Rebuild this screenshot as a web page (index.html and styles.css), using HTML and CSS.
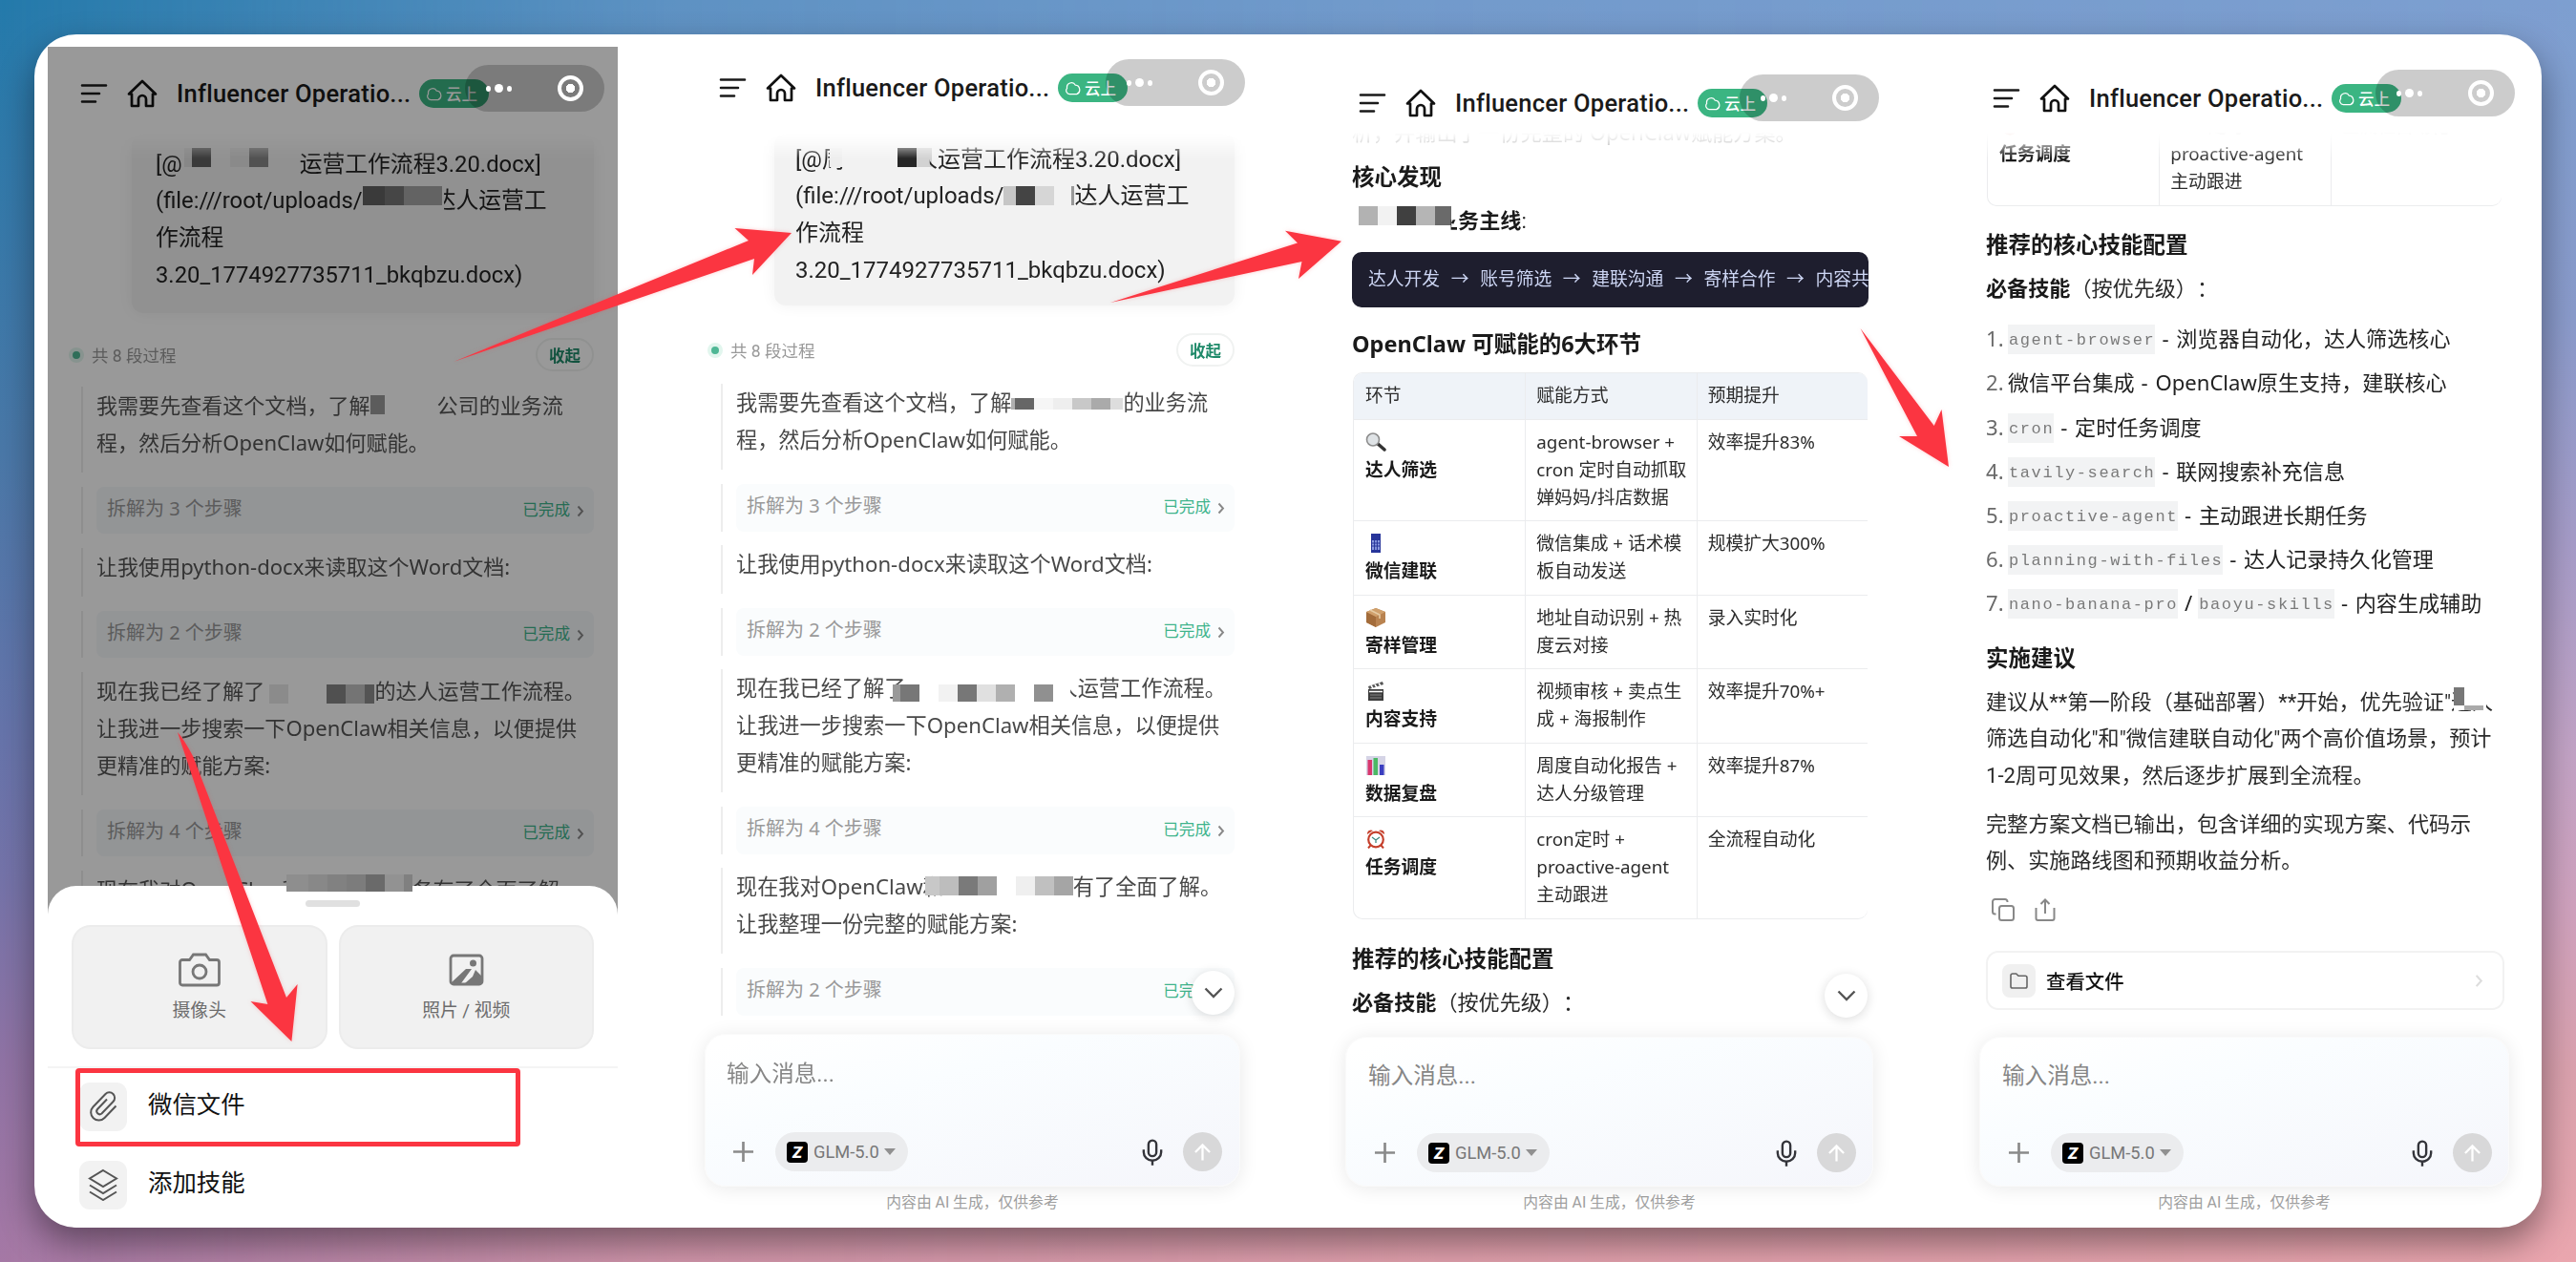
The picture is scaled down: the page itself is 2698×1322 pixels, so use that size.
FILE: index.html
```html
<!DOCTYPE html>
<html lang="zh-CN">
<head>
    <meta charset="UTF-8">
    <meta name="viewport" content="width=device-width, initial-scale=1.0">
    <title>Influencer Operation</title>
    <link rel="stylesheet" href="styles.css">
</head>
<body>
    <!-- shared icons -->
    <svg class="sprite" aria-hidden="true">
        <symbol id="i-menu" viewBox="0 0 28 20"><path d="M1.5 1.5h25M1.5 10h18M1.5 18.5h14" fill="none" stroke="currentColor" stroke-width="2.6" stroke-linecap="round"/></symbol>
        <symbol id="i-home" viewBox="0 0 32 30"><path d="M5 15.5H2L16 2l14 13.5h-3V28h-7v-7a4 4 0 0 0-8 0v7H5z" fill="none" stroke="currentColor" stroke-width="2.7" stroke-linejoin="round"/></symbol>
        <symbol id="i-cloud" viewBox="0 0 18 16"><path d="M5 14.5a4 4 0 0 1-2.8-6.600A5 5 0 0 1 11.500 4.500 5.200 5.200 0 0 1 13 14.500z" fill="none" stroke="currentColor" stroke-width="1.300"/></symbol>
        <symbol id="i-plus" viewBox="0 0 24 24"><path d="M12 1v22M1 12h22" stroke="currentColor" stroke-width="2.800"/></symbol>
        <symbol id="i-mic" viewBox="0 0 24 30"><rect x="7.500" y="1.500" width="9" height="18" rx="4.500" fill="none" stroke="currentColor" stroke-width="2.600"/><path d="M2 12v3a10 9.500 0 0 0 20 0v-3M12 24.500V30" fill="none" stroke="currentColor" stroke-width="2.600"/></symbol>
        <symbol id="i-up" viewBox="0 0 20 20"><path d="M10 19V2M2 10l8-8 8 8" fill="none" stroke="currentColor" stroke-width="2.400"/></symbol>
        <symbol id="i-right" viewBox="0 0 8 12"><path d="M1.500 1l4.500 5-4.500 5" fill="none" stroke="currentColor" stroke-width="1.900"/></symbol>
        <symbol id="i-down" viewBox="0 0 20 12"><path d="M1.500 1.500l8.500 8.500 8.500-8.500" fill="none" stroke="currentColor" stroke-width="2.400"/></symbol>
    </svg>

    <div class="frame">
        <!-- 1: picking the file -->
        <section class="phone phone-pick">
            <header class="bar">
                <svg class="menu"><use href="#i-menu"/></svg>
                <svg class="home"><use href="#i-home"/></svg>
                <h1>Influencer Operatio...</h1>
                <span class="cloud"><svg><use href="#i-cloud"/></svg>云上</span>
            </header>
            <div class="chat">
                <div class="bubble">[@<span class="mosaic m-a1"></span>运营工作流程3.20.docx]<br>(file:///root/uploads/<span class="mosaic m-a2"></span><span class="cut cut-left">达</span>人运营工<br>作流程<br>3.20_1774927735711_bkqbzu.docx)</div>
                <div class="status"><i class="dot"></i>共 8 段过程<button>收起</button></div>
                <div class="process">
                    <p>我需要先查看这个文档，了解<span class="mosaic m-a3"></span>公司的业务流<br>程，然后分析OpenClaw如何赋能。</p>
                    <div class="step">拆解为 3 个步骤<span class="done">已完成<svg><use href="#i-right"/></svg></span></div>
                    <p>让我使用python-docx来读取这个Word文档:</p>
                    <div class="step">拆解为 2 个步骤<span class="done">已完成<svg><use href="#i-right"/></svg></span></div>
                    <p>现在我已经了解了<span class="mosaic m-a4"></span>的达人运营工作流程。<br>让我进一步搜索一下OpenClaw相关信息，以便提供<br>更精准的赋能方案:</p>
                    <div class="step">拆解为 4 个步骤<span class="done">已完成<svg><use href="#i-right"/></svg></span></div>
                    <p>现在我对OpenClaw和<span class="mosaic m-a5"></span>务有了全面了解</p>
                </div>
            </div>
            <div class="dim"></div>
            <div class="capsule"><i></i><i class="mid"></i><i></i><b></b></div>
            <div class="sheet">
                <div class="handle"></div>
                <div class="cards">
                    <div class="card">
                        <svg viewBox="0 0 44 36"><path d="M4 7.500h7.500L15.500 2h13l4 5.500H40a2.500 2.500 0 0 1 2.500 2.500v21.500A2.500 2.500 0 0 1 40 34H4a2.500 2.500 0 0 1-2.500-2.500V10A2.500 2.500 0 0 1 4 7.500z"/><circle cx="22" cy="20" r="7"/></svg>
                        摄像头
                    </div>
                    <div class="card">
                        <svg viewBox="0 0 44 36"><rect x="6" y="3" width="33" height="30" rx="3"/><circle cx="29.500" cy="11" r="3.500" class="solid"/><path class="solid" d="M7 31l15-14h6l-11 15H7zM21 32l8-7 3-7 7 7v7z"/></svg>
                        照片 / 视频
                    </div>
                </div>
                <div class="option">
                    <span class="tile"><svg viewBox="0 0 32 34"><path d="M29.500 16.500L17.500 29a8 8 0 0 1-12-11.500L18.500 4a5.600 5.600 0 0 1 8 8L14.500 24.500a3.200 3.200 0 0 1-4.500-4.500L20 9.500"/></svg></span>
                    <span>微信文件</span>
                </div>
                <div class="option">
                    <span class="tile"><svg viewBox="0 0 32 34"><path d="M16 2l14 8.500L16 19 2 10.500zM2 17.500L16 26l14-8.500M2 24.500L16 33l14-8.500"/></svg></span>
                    <span>添加技能</span>
                </div>
            </div>
            <div class="mosaic m-edge"></div>
            <div class="highlight"></div>
        </section>

        <!-- 2: analysis running -->
        <section class="phone phone-run">
            <header class="bar">
                <svg class="menu"><use href="#i-menu"/></svg>
                <svg class="home"><use href="#i-home"/></svg>
                <h1>Influencer Operatio...</h1>
                <span class="cloud"><svg><use href="#i-cloud"/></svg>云上</span>
            </header>
            <div class="capsule"><i></i><i class="mid"></i><i></i><b></b></div>
            <div class="chat">
                <div class="bubble">[@周<span class="mosaic m-b1"></span><span class="cut cut-corner">人</span>运营工作流程3.20.docx]<br>(file:///root/uploads/<span class="mosaic m-b2"></span>达人运营工<br>作流程<br>3.20_1774927735711_bkqbzu.docx)</div>
                <div class="status"><i class="dot"></i>共 8 段过程<button>收起</button></div>
                <div class="process">
                    <p>我需要先查看这个文档，了解<span class="mosaic m-b3"></span>的业务流<br>程，然后分析OpenClaw如何赋能。</p>
                    <div class="step">拆解为 3 个步骤<span class="done">已完成<svg><use href="#i-right"/></svg></span></div>
                    <p>让我使用python-docx来读取这个Word文档:</p>
                    <div class="step">拆解为 2 个步骤<span class="done">已完成<svg><use href="#i-right"/></svg></span></div>
                    <p>现在我已经了解了<span class="mosaic m-b4"></span><span class="cut cut-corner">人</span>运营工作流程。<br>让我进一步搜索一下OpenClaw相关信息，以便提供<br>更精准的赋能方案:</p>
                    <div class="step">拆解为 4 个步骤<span class="done">已完成<svg><use href="#i-right"/></svg></span></div>
                    <p>现在我对OpenClaw和<span class="mosaic m-b5"></span>有了全面了解。<br>让我整理一份完整的赋能方案:</p>
                    <div class="step">拆解为 2 个步骤<span class="done">已完成<svg><use href="#i-right"/></svg></span></div>
                </div>
            </div>
            <div class="composer">
                <button class="to-bottom"><svg><use href="#i-down"/></svg></button>
                <div class="placeholder">输入消息...</div>
                <div class="tools">
                    <svg class="plus"><use href="#i-plus"/></svg>
                    <span class="model"><b>Z</b>GLM-5.0<i></i></span>
                    <svg class="mic"><use href="#i-mic"/></svg>
                    <span class="send"><svg><use href="#i-up"/></svg></span>
                </div>
            </div>
            <footer>内容由 AI 生成，仅供参考</footer>
        </section>

        <!-- 3: findings -->
        <section class="phone phone-find">
            <header class="bar">
                <svg class="menu"><use href="#i-menu"/></svg>
                <svg class="home"><use href="#i-home"/></svg>
                <h1>Influencer Operatio...</h1>
                <span class="cloud"><svg><use href="#i-cloud"/></svg>云上</span>
            </header>
            <div class="capsule"><i></i><i class="mid"></i><i></i><b></b></div>
            <div class="chat article">
                <p class="leading">析，并输出了一份完整的 OpenClaw赋能方案。</p>
                <h3 class="first">核心发现</h3>
                <p><strong><span class="mosaic m-c1"></span><span class="cut cut-corner">业</span>务主线</strong>:</p>
                <pre class="flow">达人开发<i>→</i>账号筛选<i>→</i>建联沟通<i>→</i>寄样合作<i>→</i>内容共创</pre>
                <h3>OpenClaw 可赋能的6大环节</h3>
                <table>
                    <tr><th>环节</th><th>赋能方式</th><th>预期提升</th></tr>
                    <tr>
                        <td><svg viewBox="0 0 22 20"><path d="M12 11l8 7" stroke="#333" stroke-width="3.500" stroke-linecap="round"/><circle cx="8" cy="7.500" r="6.500" fill="#dfe3e6" stroke="#8d8d8d" stroke-width="1.600"/></svg><br><strong>达人筛选</strong></td>
                        <td>agent-browser +<br>cron 定时自动抓取<br>婵妈妈/抖店数据</td>
                        <td>效率提升83%</td>
                    </tr>
                    <tr>
                        <td><svg viewBox="0 0 22 20"><path d="M6 0h10v20H6z" fill="#27359a"/><path d="M7 7h8v10H7z" fill="#8b9be0"/><path d="M7 10h8M7 13h8M9.600 7v10M12.400 7v10" stroke="#27359a"/></svg><br><strong>微信建联</strong></td>
                        <td>微信集成 + 话术模<br>板自动发送</td>
                        <td>规模扩大300%</td>
                    </tr>
                    <tr>
                        <td><svg viewBox="0 0 22 20"><path d="M11 0l10 4v11l-10 5-10-5V4z" fill="#b98350"/><path d="M1 4l10 5v11L1 15z" fill="#a36c3a"/><path d="M11 0l10 4-10 5L1 4z" fill="#d0a06c"/><path d="M5 2l10 5v4" fill="none" stroke="#e6cba4" stroke-width="1.600"/></svg><br><strong>寄样管理</strong></td>
                        <td>地址自动识别 + 热<br>度云对接</td>
                        <td>录入实时化</td>
                    </tr>
                    <tr>
                        <td><svg viewBox="0 0 22 20"><path d="M3 8h16v12H3z" fill="#3c3c3c"/><path d="M3 5l15-5 1 3L4 8z" fill="#555"/><path d="M6 4l2 3M10 3l2 3M14 1.500l2 3M4 10.500h14" stroke="#fff" stroke-width="1.500"/><path d="M5 14h12M5 17h12" stroke="#999" stroke-width=".8"/></svg><br><strong>内容支持</strong></td>
                        <td>视频审核 + 卖点生<br>成 + 海报制作</td>
                        <td>效率提升70%+</td>
                    </tr>
                    <tr>
                        <td><svg viewBox="0 0 22 20"><path d="M1 0h20v20H1z" fill="#d5d4e6"/><path d="M2.500 4h4.500v16H2.500z" fill="#d9376e"/><path d="M8.500 2h4.500v18H8.500z" fill="#4bb964"/><path d="M15 9h4.500v11H15z" fill="#3b3fc0"/></svg><br><strong>数据复盘</strong></td>
                        <td>周度自动化报告 +<br>达人分级管理</td>
                        <td>效率提升87%</td>
                    </tr>
                    <tr>
                        <td><svg viewBox="0 0 22 20"><path d="M6 16l-3 3.500M16 16l3 3.500" stroke="#c5402c" stroke-width="2"/><path d="M2 5a4 4 0 0 1 6-4zM20 5a4 4 0 0 0-6-4z" fill="#c5402c"/><circle cx="11" cy="10.500" r="7.800" fill="#fff" stroke="#c5402c" stroke-width="2.200"/><path d="M7 8l4 3 4-3M11 11v3" fill="none" stroke="#3f8a82" stroke-width="1.300"/></svg><br><strong>任务调度</strong></td>
                        <td>cron定时 +<br>proactive-agent<br>主动跟进</td>
                        <td>全流程自动化</td>
                    </tr>
                </table>
                <h3 class="after-table">推荐的核心技能配置</h3>
                <p><strong>必备技能</strong>（按优先级）：</p>
            </div>
            <div class="composer">
                <button class="to-bottom"><svg><use href="#i-down"/></svg></button>
                <div class="placeholder">输入消息...</div>
                <div class="tools">
                    <svg class="plus"><use href="#i-plus"/></svg>
                    <span class="model"><b>Z</b>GLM-5.0<i></i></span>
                    <svg class="mic"><use href="#i-mic"/></svg>
                    <span class="send"><svg><use href="#i-up"/></svg></span>
                </div>
            </div>
            <footer>内容由 AI 生成，仅供参考</footer>
        </section>

        <!-- 4: recommended skills -->
        <section class="phone phone-skills">
            <header class="bar">
                <svg class="menu"><use href="#i-menu"/></svg>
                <svg class="home"><use href="#i-home"/></svg>
                <h1>Influencer Operatio...</h1>
                <span class="cloud"><svg><use href="#i-cloud"/></svg>云上</span>
            </header>
            <div class="capsule"><i></i><i class="mid"></i><i></i><b></b></div>
            <div class="chat article">
                <table class="tail">
                    <tr>
                        <td><svg viewBox="0 0 22 20"><circle cx="11" cy="10.500" r="7.800" fill="#fff" stroke="#c5402c" stroke-width="2.200"/></svg><br><strong>任务调度</strong></td>
                        <td>cron定时 +<br>proactive-agent<br>主动跟进</td>
                        <td>全流程自动化</td>
                    </tr>
                </table>
                <h3 class="after-table">推荐的核心技能配置</h3>
                <p><strong>必备技能</strong>（按优先级）：</p>
                <ol>
                    <li><code>agent-browser</code><span>- 浏览器自动化，达人筛选核心</span></li>
                    <li>微信平台集成<span>- OpenClaw原生支持，建联核心</span></li>
                    <li><code>cron</code><span>- 定时任务调度</span></li>
                    <li><code>tavily-search</code><span>- 联网搜索补充信息</span></li>
                    <li><code>proactive-agent</code><span>- 主动跟进长期任务</span></li>
                    <li><code>planning-with-files</code><span>- 达人记录持久化管理</span></li>
                    <li><code>nano-banana-pro</code><span class="slash">/</span><code>baoyu-skills</code><span>- 内容生成辅助</span></li>
                </ol>
                <h3 class="advice">实施建议</h3>
                <p>建议从**第一阶段（基础部署）**开始，优先验证"<span class="masked">达人<span class="mosaic m-d1"></span></span><br>筛选自动化"和"微信建联自动化"两个高价值场景，预计<br>1-2周可见效果，然后逐步扩展到全流程。</p>
                <p class="next">完整方案文档已输出，包含详细的实现方案、代码示<br>例、实施路线图和预期收益分析。</p>
                <div class="actions">
                    <svg viewBox="0 0 24 24"><rect x="8" y="8" width="15" height="15" rx="2.500"/><path d="M4.500 16.500H3.500A2.500 2.500 0 0 1 1 14V3.500A2.500 2.500 0 0 1 3.500 1H14a2.500 2.500 0 0 1 2.500 2.500V4"/></svg>
                    <svg viewBox="0 0 24 24"><path d="M12 16V2M7.500 6L12 1.500 16.500 6M2.500 10v11A2 2 0 0 0 4.500 23h15a2 2 0 0 0 2-2V10"/></svg>
                </div>
                <div class="file-card">
                    <span class="tile"><svg viewBox="0 0 20 18"><path d="M1 3a2 2 0 0 1 2-2h4l2.500 2.500H17a2 2 0 0 1 2 2V15a2 2 0 0 1-2 2H3a2 2 0 0 1-2-2z"/></svg></span>
                    查看文件
                    <svg class="go"><use href="#i-right"/></svg>
                </div>
            </div>
            <div class="composer">
                <div class="placeholder">输入消息...</div>
                <div class="tools">
                    <svg class="plus"><use href="#i-plus"/></svg>
                    <span class="model"><b>Z</b>GLM-5.0<i></i></span>
                    <svg class="mic"><use href="#i-mic"/></svg>
                    <span class="send"><svg><use href="#i-up"/></svg></span>
                </div>
            </div>
            <footer>内容由 AI 生成，仅供参考</footer>
        </section>
    </div>

    <!-- arrows between the screens -->
    <svg class="arrows" viewBox="0 0 2698 1322">
        <path d="M475 379L784 252 769.500 239 829 244 788 288 790 271z"/>
        <path d="M1163 317L1359 254.500 1346 241.700 1405 252.700 1360 292 1363.500 274z"/>
        <path d="M1948.500 344L2025.700 446 2033.500 429 2041 489 1989 457 2008 457z"/>
        <path d="M186 767Q193 775 202 792L300 1045 311.600 1031 305.400 1091 262.500 1049 280.400 1052z"/>
    </svg>
</body>
</html>
```

FILE: styles.css
```css
* {
    box-sizing: border-box;
}
body {
    margin: 0;
    width: 2698px;
    height: 1322px;
    padding: 36px;
    position: relative;
    overflow: hidden;
    font-family: Roboto, "Noto Sans CJK SC", sans-serif;
    text-spacing-trim: space-all;
    color: #222;
    background: linear-gradient(#247aab 0%, #4a78a8 36%, #6674ab 58%, #7573a9 70%, #9073a5 84%, #a578a5 100%);
}
body::before {
    content: "";
    position: absolute;
    inset: 0;
    background: linear-gradient(#7d9fd0 0%, #8a9bcb 25%, #a69cc8 43%, #c3a3c5 60%, #d0a2be 72%, #dba2ae 85%, #eaa6ae 100%);
    -webkit-mask-image: linear-gradient(to right, transparent 0%, rgba(0,0,0,.65) 26%, rgba(0,0,0,.88) 55%, #000 100%);
    mask-image: linear-gradient(to right, transparent 0%, rgba(0,0,0,.65) 26%, rgba(0,0,0,.88) 55%, #000 100%);
}
h1, h3, p, ol, pre {
    margin: 0;
    padding: 0;
}
i, b {
    font-style: normal;
}
svg {
    display: block;
    flex: none;
}
button {
    padding: 0;
    font-family: inherit;
    background: #fff;
}
.sprite {
    position: absolute;
    width: 0;
    height: 0;
}
.frame {
    position: relative;
    display: flex;
    height: 1250px;
    padding-left: 14px;
    background: #fff;
    border-radius: 44px;
    box-shadow: 0 16px 36px rgba(0,0,0,.42);
}

/* phone columns */
.phone {
    position: relative;
    flex: none;
    display: flex;
    flex-direction: column;
    width: 595px;
    margin-left: 71px;
    white-space: nowrap;
}
.phone-pick {
    --bar-top: 34px;
    --bar-gap: 23px;
    width: 597px;
    height: 1237px;
    margin: 13px 0 0;
    overflow: hidden;
    border-bottom-left-radius: 34px;
}
.phone-run {
    --bar-top: 41px;
    --bar-gap: 29px;
    width: 599px;
    margin-left: 72px;
}
.phone-find {
    --bar-top: 57px;
    --bar-gap: 13px;
    width: 593px;
}
.phone-skills {
    --bar-top: 52px;
    --bar-gap: 18px;
}

/* title bar */
.bar {
    display: flex;
    align-items: center;
    flex: none;
    height: 30px;
    margin: var(--bar-top) 0 var(--bar-gap);
    padding-left: 34px;
    color: #1a1a1a;
}
.menu {
    width: 29px;
    height: 20px;
}
.home {
    width: 32px;
    height: 30px;
    margin-left: 20px;
    color: #111;
}
.bar h1 {
    width: 254px;
    margin-left: 20px;
    font-size: 25.5px;
    font-weight: 500;
    line-height: 30px;
    letter-spacing: .25px;
}
.cloud {
    display: flex;
    align-items: center;
    gap: 3px;
    width: 73px;
    height: 30px;
    padding-left: 7px;
    border-radius: 15px;
    background: #3bb582;
    color: #fff;
    font-size: 16.5px;
    font-weight: 500;
}
.cloud svg {
    width: 18px;
    height: 15px;
}
.capsule {
    position: absolute;
    top: calc(var(--bar-top) - 15px);
    right: 14px;
    width: 146px;
    height: 49px;
    padding: 0 22px 0 22px;
    display: flex;
    align-items: center;
    gap: 4px;
    border-radius: 25px;
    background: rgba(0,0,0,.2);
}
.capsule i {
    width: 5px;
    height: 6px;
    border-radius: 50%;
    background: #fff;
}
.capsule .mid {
    width: 9px;
    height: 9px;
}
.capsule b {
    width: 27px;
    height: 27px;
    margin-left: auto;
    border: 4px solid #fff;
    border-radius: 50%;
    background: radial-gradient(circle, #fff 0 4.5px, transparent 5px);
}

/* chat */
.chat {
    flex: 1;
    min-height: 0;
    overflow: hidden;
    -webkit-mask-image: linear-gradient(transparent 3px, rgba(0,0,0,.2) 10px, #000 30px);
    mask-image: linear-gradient(transparent 3px, rgba(0,0,0,.2) 10px, #000 30px);
}
.bubble {
    margin: 4px 25px 0 92px;
    height: 180px;
    padding: 7.5px 22px 0;
    font-size: 24px;
    line-height: 38.7px;
    background: #f2f2f2;
    border-radius: 12px;
    box-shadow: 0 0 16px rgba(0,0,0,.06);
}
.phone-pick .bubble {
    height: 188px;
    margin-left: 88px;
    padding: 12.5px 25px 0;
    font-size: 23.8px;
}
.status {
    display: flex;
    align-items: center;
    height: 35px;
    margin: 29px 25px 0 26px;
    color: #999;
    font-size: 17.5px;
}
.phone-pick .status {
    margin-top: 26px;
}
.dot {
    width: 8px;
    height: 8px;
    margin-right: 12px;
    border-radius: 50%;
    background: #4fb795;
    box-shadow: 0 0 0 4px #e2f6ee;
}
.status button {
    width: 61px;
    height: 35px;
    margin-left: auto;
    border: 2px solid #f0f2f1;
    border-radius: 18px;
    color: #1f8a6a;
    font-size: 16.5px;
    font-weight: 700;
}
.process {
    margin: 18px 25px 0 36px;
    display: flex;
    flex-direction: column;
    gap: 14.5px;
    font-family: "Noto Sans", "Noto Sans CJK SC", sans-serif;
}
.phone-pick .process {
    margin: 16px 25px 0 35px;
    gap: 15px;
}
.process > * {
    position: relative;
    margin-left: 16px;
}
/* thread line on the left */
.process > *::before {
    content: "";
    position: absolute;
    left: -16px;
    top: 0;
    bottom: 0;
    width: 2px;
    background: #ededed;
}
.process p {
    padding-bottom: 12px;
    font-size: 22.2px;
    line-height: 39px;
    color: #484848;
}
.phone-pick .process p {
    font-size: 22.05px;
    color: #555;
}
.step {
    display: flex;
    align-items: center;
    height: 50px;
    padding: 0 10px 6px 11px;
    border-radius: 8px;
    background: #fafcfd;
    color: #999;
    font-size: 20px;
}
.phone-pick .step {
    height: 49px;
    background: #f5f8fb;
}
.done {
    display: flex;
    align-items: center;
    gap: 7px;
    margin: 3px 0 0 auto;
    color: #3fb48c;
    font-size: 16.6px;
}
.done svg {
    width: 8px;
    height: 13px;
    margin-top: 4px;
    color: #888;
}

/* pixelated censor blocks */
.mosaic {
    display: inline-block;
    position: relative;
    height: 20px;
}
.m-a1 {
    width: 123px;
    vertical-align: 5px;
    background: linear-gradient(to right, transparent 2px, #e2e2e2 2px 10px, #616161 10px 30px, transparent 30px 50px, #e6e6e6 50px 70px, #898989 70px 90px, transparent 90px);
}
.m-a2 {
    width: 83px;
    margin-right: -9px;
    vertical-align: 3px;
    background: linear-gradient(to right, #616161 0 23px, #757575 23px 43px, #a5a5a5 43px);
}
.m-a3 {
    width: 70px;
    vertical-align: -1px;
    background: linear-gradient(to right, #9a9a9a 0 15px, transparent 15px);
}
.m-a4 {
    width: 115px;
    vertical-align: -5px;
    background: linear-gradient(to right, transparent 5px, #e8e8e8 5px 25px, transparent 25px 65px, #868686 65px 85px, #c2c2c2 85px 105px, #8c8c8c 105px);
}
.m-a5 {
    width: 114px;
}
.m-edge {
    position: absolute;
    left: 250px;
    top: 867px;
    width: 132px;
    height: 18px;
    background: linear-gradient(to right, #8e8e8e 0 23px, #888 23px 43px, #818181 43px 63px, #7c7c7c 63px 83px, #6a6a6a 83px 103px, #929292 103px 123px, #808080 123px);
}
.m-b1 {
    width: 107px;
    margin: 0 -18px 0 -16px;
    vertical-align: 0;
    background: linear-gradient(to right, #eee 0 13px, #f2f2f2 13px 71px, #262626 71px 91px, #d2d2d2 91px);
}
.m-b2 {
    width: 74px;
    vertical-align: -2px;
    background: linear-gradient(to right, #c6c6c6 0 13px, #444 13px 33px, #d6d6d6 33px 53px, transparent 53px 71px, #999 71px);
}
.m-b3 {
    width: 117px;
    height: 12px;
    vertical-align: 1px;
    background: linear-gradient(to right, #b0b0b0 0 4px, #666 4px 24px, #f6f6f6 24px 44px, #eee 44px 64px, #c8c8c8 64px 84px, #aaa 84px 104px, #ddd 104px);
}
.m-b4 {
    width: 186px;
    height: 18px;
    margin: 0 -14px 0 -14px;
    vertical-align: -6px;
    background: linear-gradient(to right, #999 0 8px, #777 8px 28px, #fff 28px 48px, #f2f2f2 48px 68px, #777 68px 88px, #e0e0e0 88px 108px, #b0b0b0 108px 128px, #fff 128px 148px, #909090 148px 168px, #fff 168px);
}
.m-b5 {
    width: 155px;
    margin-left: -20px;
    vertical-align: -1px;
    background: linear-gradient(to right, #c8c8c8 0 15px, #bdbdbd 15px 35px, #7a7a7a 35px 55px, #a0a0a0 55px 75px, #fff 75px 95px, #efefef 95px 115px, #c0c0c0 115px 135px, #a5a5a5 135px);
}
.m-c1 {
    width: 97px;
    margin: 0 -15px 0 7px;
    vertical-align: 3px;
    background: linear-gradient(to right, #b2b2b2 0 20px, #f2f2f2 20px 40px, #404040 40px 60px, #b5b5b5 60px 80px, #6a6a6a 80px);
}
.masked {
    position: relative;
}
.m-d1 {
    position: absolute;
    left: 3px;
    top: -2px;
    width: 34px;
    height: 24px;
    background: linear-gradient(#777, #777) 0 0 / 11px 19px no-repeat, linear-gradient(#aaa, #aaa) 11px 19px / 20px 5px no-repeat, #fff;
}
/* half-censored glyphs next to a block */
.cut {
    display: inline-block;
}
.cut-left {
    clip-path: inset(0 0 0 48%);
}
.cut-corner {
    clip-path: inset(48% 0 0 66%);
}

/* markdown answer */
.article {
    padding: 0 25px 0 27px;
}
.article p {
    font-size: 22.1px;
    line-height: 38.7px;
    color: #2a2a2a;
}
.article h3 {
    margin: 20px 0 9px;
    font-family: "Noto Sans", "Noto Sans CJK SC", sans-serif;
    font-size: 23.5px;
    line-height: 36px;
    font-weight: 700;
    color: #1a1a1a;
}
.article strong {
    font-weight: 700;
    color: #1a1a1a;
}
.article .leading {
    margin-top: -17px;
    font-family: "Noto Sans", "Noto Sans CJK SC", sans-serif;
    opacity: .5;
}
.article .first {
    margin-top: 9px;
}
.article .after-table {
    margin-top: 23px;
}
.phone-skills .after-table {
    margin-top: 22px;
}
.article .advice {
    margin-top: 16px;
}
.article .next {
    margin-top: 12px;
}
.flow {
    height: 58px;
    margin-top: 14px;
    padding-left: 17px;
    overflow: hidden;
    border-radius: 10px;
    background: #1e1e2e;
    color: #cdd6f4;
    font-family: inherit;
    font-size: 18.8px;
    line-height: 58px;
}
.flow i {
    display: inline-block;
    width: 42px;
    text-align: center;
}
table {
    width: 539px;
    margin: 12px 0 0 1px;
    table-layout: fixed;
    border-collapse: separate;
    border-spacing: 0;
    border: solid #ebecee;
    border-width: 1px 0 1px 1px;
    border-radius: 10px;
    overflow: hidden;
    font-family: "Noto Sans", "Noto Sans CJK SC", sans-serif;
    font-size: 18.8px;
    line-height: 29px;
    color: #2c2c2c;
}
th, td {
    padding: 9px 0 9.500px 11px;
    text-align: left;
    vertical-align: top;
    font-weight: 400;
    border-left: 1px solid #ebecee;
}
td {
    border-top: 1px solid #ebecee;
}
th {
    background: #eff3f8;
}
th:first-child, td:first-child {
    padding-left: 12px;
    border-left: 0;
}
td svg {
    display: inline-block;
    width: 22px;
    height: 20px;
    vertical-align: -3px;
}
.article .tail {
    margin-top: -29px;
}
ol {
    margin-top: 10px;
    list-style: none;
    counter-reset: n;
    font-family: "Noto Sans", "Noto Sans CJK SC", sans-serif;
    font-size: 22.1px;
    line-height: 46.2px;
}
ol li {
    display: flex;
    align-items: center;
    height: 46.2px;
    color: #222;
}
ol li::before {
    counter-increment: n;
    content: counter(n) ".";
    width: 23px;
    color: #6a6a6a;
}
ol li span {
    margin-left: 7px;
    word-spacing: 2px;
}
ol .slash {
    margin-right: 6px;
}
code {
    height: 31px;
    margin-top: 3px;
    padding: 3px 0 0 1px;
    background: #f2f3f4;
    color: #7a7a7a;
    font-family: "Liberation Mono", monospace;
    font-size: 17px;
    line-height: 28px;
    letter-spacing: 1.6px;
}
.actions {
    display: flex;
    gap: 20px;
    margin: 20px 0 0 6px;
}
.actions svg {
    width: 24px;
    height: 24px;
    fill: none;
    stroke: #888;
    stroke-width: 2;
}
.file-card {
    display: flex;
    align-items: center;
    height: 62px;
    margin-top: 31px;
    padding: 0 20px 0 15px;
    border: 2px solid #f2f2f2;
    border-radius: 13px;
    font-size: 20.4px;
    font-weight: 500;
    color: #111;
}
.file-card .tile {
    display: grid;
    place-items: center;
    width: 35px;
    height: 35px;
    margin-right: 11px;
    border-radius: 8px;
    background: #f0f0f0;
}
.tile svg {
    fill: none;
    stroke: #666;
}
.file-card .tile svg {
    width: 19px;
    height: 17px;
    stroke-width: 1.7;
}
.go {
    width: 9px;
    height: 15px;
    margin-left: auto;
    color: #ddd;
}

/* input box */
.composer {
    position: relative;
    flex: none;
    display: flex;
    flex-direction: column;
    justify-content: space-between;
    height: 157px;
    margin: 0 20px;
    padding: 22px 17px 14px 23px;
    border: 1px solid #fafafa;
    border-radius: 22px;
    background: linear-gradient(165deg, #fff 5%, #fafdff 35%, #f5f6fb 100%);
    box-shadow: 0 2px 20px rgba(0,0,0,.09);
}
.phone-run .composer {
    height: 160px;
    margin: 0 19px;
    padding: 23px 18px 15px 22px;
}
.placeholder {
    font-size: 23.6px;
    line-height: 36px;
    color: #868686;
}
.tools {
    display: flex;
    align-items: center;
}
.plus {
    width: 23px;
    height: 23px;
    margin: 0 22px 0 6px;
    color: #8a8a8a;
}
.model {
    display: flex;
    align-items: center;
    width: 139px;
    height: 41px;
    padding-left: 12px;
    border-radius: 21px;
    background: #ebecee;
    color: #777;
    font-size: 18.3px;
}
.model b {
    width: 22px;
    height: 22px;
    margin-right: 6px;
    border-radius: 4px;
    background: #000;
    color: #fff;
    font-size: 17px;
    font-style: italic;
    font-weight: 900;
    line-height: 22px;
    text-align: center;
}
.model i {
    margin-left: 5px;
    border: solid transparent;
    border-width: 7px 6px 0;
    border-top-color: #909090;
}
.mic {
    width: 22px;
    height: 30px;
    margin: 0 21px 0 auto;
    color: #33343a;
}
.send {
    display: grid;
    place-items: center;
    width: 41px;
    height: 41px;
    border-radius: 50%;
    background: #d8d8d9;
    color: #fff;
}
.send svg {
    width: 19px;
    height: 20px;
}
.to-bottom {
    position: absolute;
    right: 5px;
    top: -67px;
    display: grid;
    place-items: center;
    width: 45px;
    height: 46px;
    border: 0;
    border-radius: 50%;
    box-shadow: 0 2px 12px rgba(0,0,0,.14);
    color: #555;
}
.to-bottom svg {
    width: 20px;
    height: 12px;
}
footer {
    flex: none;
    height: 43px;
    padding-top: 7px;
    text-align: center;
    font-size: 15.8px;
    line-height: 20px;
    color: #a0a0a0;
}

/* attachment sheet */
.dim {
    position: absolute;
    inset: 0;
    background: rgba(0,0,0,.4);
}
.sheet {
    position: absolute;
    left: 0;
    right: 0;
    bottom: 0;
    height: 358px;
    padding-top: 15px;
    border-radius: 30px 30px 0 0;
    background: #fff;
}
.handle {
    width: 57px;
    height: 7px;
    margin: 0 auto;
    border-radius: 4px;
    background: #e0e0e0;
}
.cards {
    display: flex;
    gap: 12px;
    padding: 19px 25px 18px;
    border-bottom: 2px solid #f4f4f4;
}
.card {
    flex: 1;
    height: 130px;
    padding-top: 27px;
    border: 2px solid #ececec;
    border-radius: 20px;
    background: #f1f1f1;
    color: #6c6c6c;
    font-size: 18.8px;
    line-height: 28px;
    text-align: center;
}
.card svg {
    width: 44px;
    height: 36px;
    margin: 0 auto 11px;
    fill: none;
    stroke: #777;
    stroke-width: 2.8;
}
.card .solid {
    fill: #777;
    stroke: none;
}
.option {
    display: flex;
    align-items: center;
    height: 51px;
    margin: 15px 0 0 33px;
    padding-bottom: 1px;
    font-size: 25.4px;
    line-height: 36px;
    color: #111;
}
.option > span:last-child {
    padding-bottom: 4px;
}
.option + .option {
    margin-top: 31px;
}
.option .tile {
    display: grid;
    place-items: center;
    width: 50px;
    height: 51px;
    margin-right: 22px;
    border-radius: 11px;
    background: #f2f2f2;
}
.option .tile svg {
    width: 32px;
    height: 34px;
    stroke: #555;
    stroke-width: 2;
}
.highlight {
    position: absolute;
    left: 29px;
    top: 1070px;
    width: 466px;
    height: 82px;
    border: 5.500px solid #fb3541;
    border-radius: 4px;
}
.arrows {
    position: absolute;
    left: 0;
    top: 0;
    width: 2698px;
    height: 1322px;
    fill: #fb3541;
    filter: drop-shadow(0 0 2px rgba(251,53,65,.25));
}
```
